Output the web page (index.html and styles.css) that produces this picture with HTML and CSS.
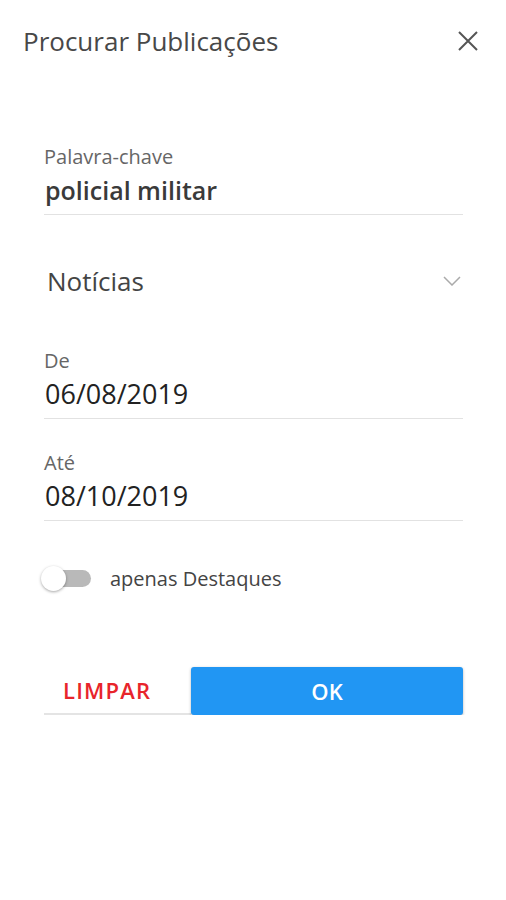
FILE: index.html
```html
<!DOCTYPE html>
<html lang="pt">
<head>
  <meta charset="UTF-8">
  <meta name="viewport" content="width=device-width, initial-scale=1.0">
  <title>Procurar Publicações</title>
  <link rel="stylesheet" href="styles.css">
</head>
<body>
  <header class="dialog-header">
    <h1>Procurar Publicações</h1>
    <button class="close-btn" aria-label="Fechar">
      <svg width="20" height="20" viewBox="0 0 20 20">
        <path d="M1 1 L19 19 M19 1 L1 19" stroke="#555" stroke-width="2" fill="none"/>
      </svg>
    </button>
  </header>

  <form class="search-form">
    <div class="field first">
      <label>Palavra-chave</label>
      <div class="value keyword">policial militar</div>
    </div>

    <div class="select">
      <span>Notícias</span>
      <svg width="18" height="10" viewBox="0 0 18 10">
        <path d="M1 1 L9 9 L17 1" stroke="#aaa" stroke-width="1.5" fill="none"/>
      </svg>
    </div>

    <div class="field after-select">
      <label>De</label>
      <div class="value">06/08/2019</div>
    </div>

    <div class="field">
      <label>Até</label>
      <div class="value">08/10/2019</div>
    </div>

    <div class="toggle-row">
      <span class="toggle"><span class="thumb"></span></span>
      <span class="toggle-label">apenas Destaques</span>
    </div>

    <div class="actions">
      <button type="button" class="btn-clear">LIMPAR</button>
      <button type="button" class="btn-ok">OK</button>
    </div>
  </form>
</body>
</html>
```

FILE: styles.css
```css
body {
  margin: 0;
  font-family: "Open Sans", "Noto Sans", sans-serif;
  background: #fff;
  color: #333;
}
button {
  font-family: inherit;
  border: none;
  background: none;
  padding: 0;
  cursor: pointer;
}
.dialog-header {
  display: flex;
  justify-content: space-between;
  align-items: center;
  padding: 22px 28px 0 23px;
  height: 38px;
}
.dialog-header h1 {
  margin: 0;
  font-size: 26px;
  font-weight: 400;
  color: #484848;
}
.close-btn {
  width: 20px;
  height: 20px;
}
.search-form {
  padding: 0 43px 0 44px;
}
.field {
  border-bottom: 1px solid #e2e2e2;
  padding-bottom: 7px;
  margin-top: 32px;
}
.field.first {
  margin-top: 85px;
}
.field.after-select {
  margin-top: 48px;
}
.field label {
  display: block;
  font-size: 20px;
  line-height: 24px;
  color: #666;
}
.field .value {
  margin-top: 4px;
  font-size: 27px;
  line-height: 34px;
  color: #222;
  padding-left: 1px;
}
.field .keyword {
  font-weight: 600;
  font-size: 25px;
  color: #3a3a3a;
}
.select {
  display: flex;
  justify-content: space-between;
  align-items: center;
  height: 40px;
  margin-top: 46px;
  padding: 0 2px 0 3px;
  font-size: 26px;
  color: #444;
}
.toggle-row {
  display: flex;
  align-items: center;
  margin-top: 43px;
  height: 28px;
}
.toggle {
  position: relative;
  width: 46px;
  height: 17px;
  border-radius: 9px;
  background: #b9b9b9;
  margin-left: 1px;
}
.toggle .thumb {
  position: absolute;
  left: -4px;
  top: -4px;
  width: 25px;
  height: 25px;
  border-radius: 50%;
  background: #fff;
  box-shadow: 0 1px 3px rgba(0, 0, 0, 0.35);
}
.toggle-label {
  margin-left: 19px;
  font-size: 20px;
  color: #444;
}
.actions {
  display: flex;
  align-items: stretch;
  margin-top: 75px;
  height: 48px;
}
.btn-clear {
  width: 147px;
  border-bottom: 2px solid #e4e4e4;
  color: #e8242b;
  font-size: 22px;
  font-weight: 600;
  letter-spacing: 1.2px;
  text-align: left;
  padding-left: 19px;
}
.btn-ok {
  flex: 1;
  background: #2196f3;
  color: #fff;
  font-size: 22px;
  font-weight: 600;
  border-radius: 3px;
  box-shadow: 0 1px 3px rgba(0, 0, 0, 0.3);
}
```
